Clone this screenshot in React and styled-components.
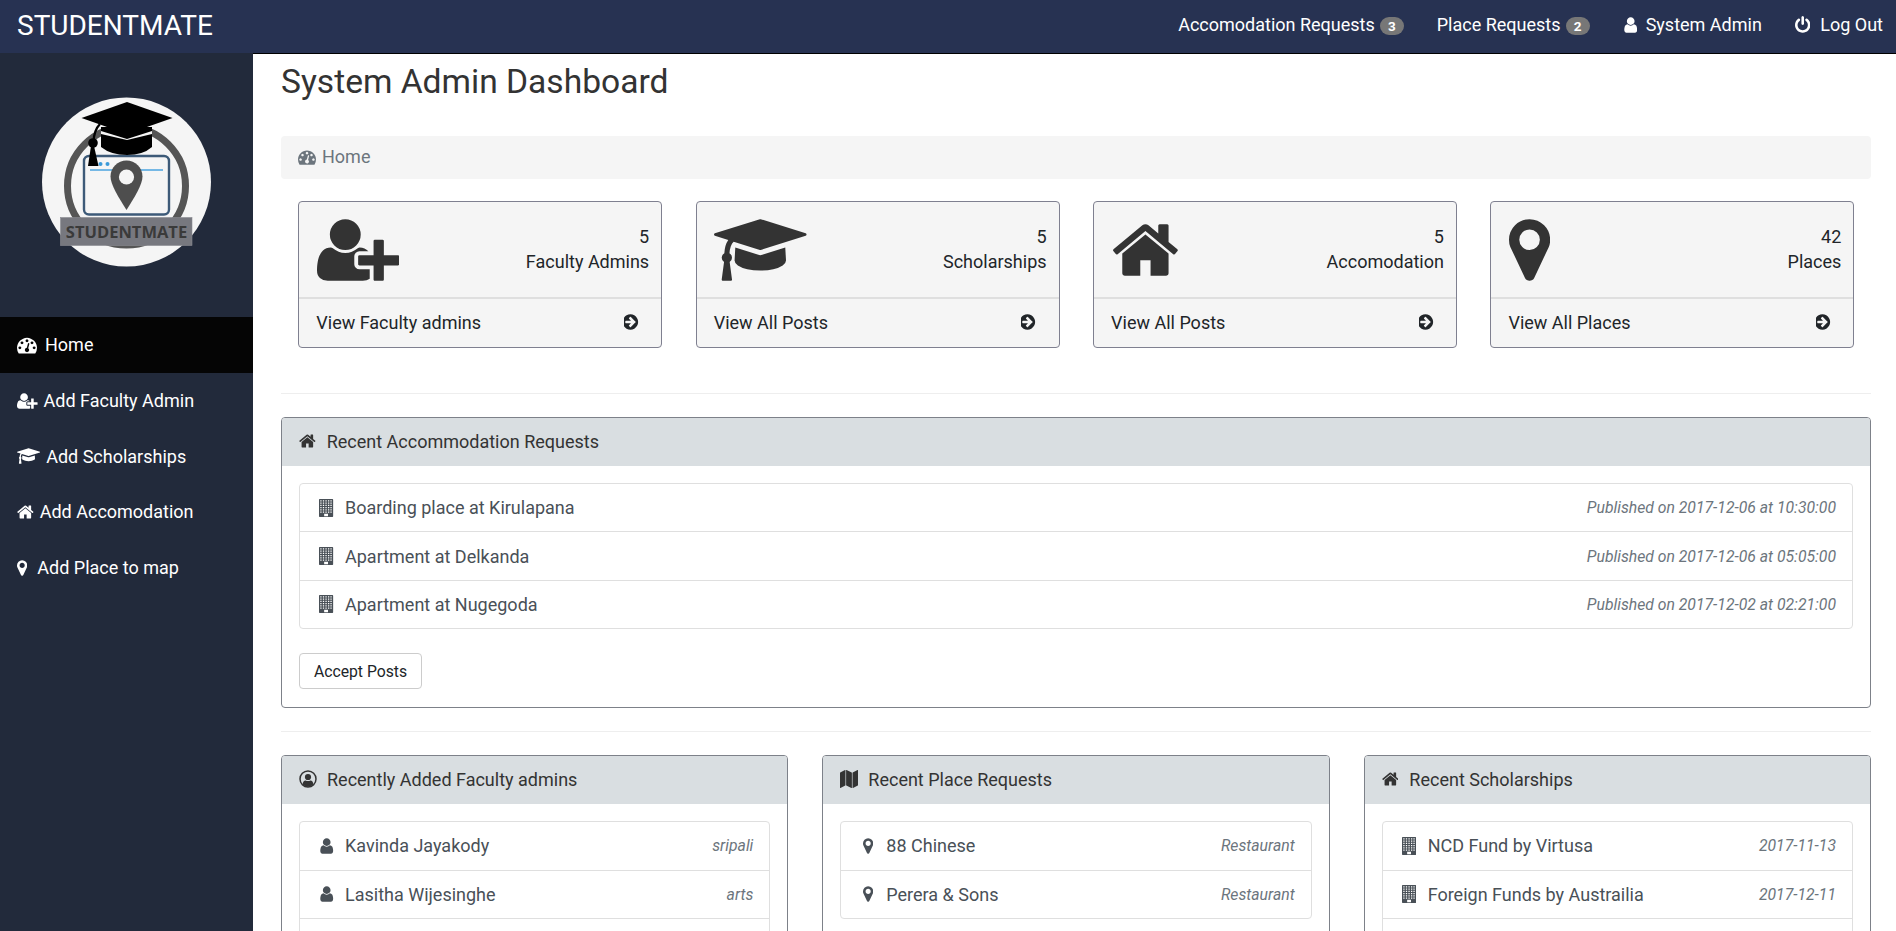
import React from "react"
import styled, { createGlobalStyle } from "styled-components"

const GlobalStyle = createGlobalStyle`
    html, body {
        margin: 0;
        height: 100%;
        overflow: hidden;
        background: #fff;
        font-family: Roboto, "Liberation Sans", sans-serif;
    }
    * {
        box-sizing: border-box;
    }
`

const buildingWindows = () => {
    let d = "M192 0h1280q64 0 64 64v1664q0 64-64 64h-1280q-64 0-64-64v-1664q0-64 64-64z"
    const cols = [320, 576, 832, 1088, 1344 - 16]
    const rows = [128, 352, 576, 800, 1024, 1248]
    rows.forEach(y => {
        cols.forEach(x => {
            d += `M${x - 64} ${y}h128v128h-128z`
        })
    })
    return d + "M640 1472h384v256h-384z"
}

const ICONS = {
    dashboard: { box: "0 0 1792 1792", d: "M384 1152q0-53-37.5-90.5t-90.5-37.5-90.5 37.5-37.5 90.5 37.5 90.5 90.5 37.5 90.5-37.5 37.5-90.5zm192-448q0-53-37.5-90.5t-90.5-37.5-90.5 37.5-37.5 90.5 37.5 90.5 90.5 37.5 90.5-37.5 37.5-90.5zm428 481l101-382q6-26-7.5-48.5t-38.5-29.5-48 6.5-30 39.5l-101 382q-60 5-107 43.5t-63 98.5q-20 77 20 146t117 89 146-20 89-117q16-60-6-117t-72-91zm660-33q0-53-37.5-90.5t-90.5-37.5-90.5 37.5-37.5 90.5 37.5 90.5 90.5 37.5 90.5-37.5 37.5-90.5zm-640-640q0-53-37.5-90.5t-90.5-37.5-90.5 37.5-37.5 90.5 37.5 90.5 90.5 37.5 90.5-37.5 37.5-90.5zm448 192q0-53-37.5-90.5t-90.5-37.5-90.5 37.5-37.5 90.5 37.5 90.5 90.5 37.5 90.5-37.5 37.5-90.5zm320 448q0 261-141 483-19 29-54 29h-1402q-35 0-54-29-141-221-141-483 0-182 71-348t191-286 286-191 348-71 348 71 286 191 191 286 71 348z" },
    userPlus: { box: "0 0 2048 1792", d: "M704 896q-159 0-271.5-112.5t-112.5-271.5 112.5-271.5 271.5-112.5 271.5 112.5 112.5 271.5-112.5 271.5-271.5 112.5zm960 128h352q13 0 22.5 9.5t9.5 22.5v192q0 13-9.5 22.5t-22.5 9.5h-352v352q0 13-9.5 22.5t-22.5 9.5h-192q-13 0-22.5-9.5t-9.5-22.5v-352h-352q-13 0-22.5-9.5t-9.5-22.5v-192q0-13 9.5-22.5t22.5-9.5h352v-352q0-13 9.5-22.5t22.5-9.5h192q13 0 22.5 9.5t9.5 22.5v352zm-736 224q0 52 38 90t90 38h256v238q-68 50-171 50h-874q-121 0-194-69t-73-190q0-53 3.5-103.5t14-109 26.5-108.5 43-97.5 62-81 85.5-53.5 111.5-20q19 0 39 17 79 61 154.5 91.5t164.5 30.5 164.5-30.5 154.5-91.5q20-17 39-17 132 0 217 96h-223q-52 0-90 38t-38 90v192z" },
    cap: { box: "0 0 2304 1792", d: "M1774 836l18 316q4 69-82 128t-235 93.5-323 34.5-323-34.5-235-93.5-82-128l18-316 574 181q22 7 48 7t48-7zm530-324q0 23-22 31l-1120 352q-4 1-10 1t-10-1l-652-206q-43 34-71 111.5t-34 178.5q63 36 63 109 0 69-58 107l58 433q2 14-8 25-9 11-24 11h-192q-15 0-24-11-10-11-8-25l58-433q-58-38-58-107 0-73 65-111 11-207 98-330l-333-104q-22-8-22-31t22-31l1120-352q4-1 10-1t10 1l1120 352q22 8 22 31z" },
    home: { box: "64 0 1664 1792", d: "M1472 992v480q0 26-19 45t-45 19h-384v-384h-256v384h-384q-26 0-45-19t-19-45v-480q0-1 .5-3t.5-3l575-474 575 474q1 2 1 6zm223-69l-62 74q-8 9-21 11h-3q-13 0-21-7l-692-577-692 577q-12 8-24 7-13-2-21-11l-62-74q-8-10-7-23.5t11-21.5l719-599q32-26 76-26t76 26l244 204v-195q0-14 9-23t23-9h192q14 0 23 9t9 23v408l219 182q10 8 11 21.5t-7 23.5z" },
    marker: { box: "384 0 1024 1792", d: "M1152 640q0-106-75-181t-181-75-181 75-75 181 75 181 181 75 181-75 75-181zm256 0q0 109-33 179l-364 774q-16 33-47.5 52t-67.5 19-67.5-19-46.5-52l-365-774q-33-70-33-179 0-212 150-362t362-150 362 150 150 362z" },
    user: { box: "128 0 1408 1792", d: "M1536 1399q0 109-62.5 187t-150.5 78h-854q-88 0-150.5-78t-62.5-187q0-85 8.5-160.5t31.5-152 58.5-131 94-89 134.5-34.5q131 128 313 128t313-128q76 0 134.5 34.5t94 89 58.5 131 31.5 152 8.5 160.5zm-256-887q0 159-112.5 271.5t-271.5 112.5-271.5-112.5-112.5-271.5 112.5-271.5 271.5-112.5 271.5 112.5 112.5 271.5z" },
    power: { box: "128 0 1536 1792", d: "M1664 896q0 156-61 298t-164 245-245 164-298 61-298-61-245-164-164-245-61-298q0-182 80.5-343t226.5-270q43-32 95.5-25t83.5 50q32 42 24.5 94.5t-49.5 84.5q-98 74-151.5 181t-53.5 228q0 104 40.5 198.5t109.5 163.5 163.5 109.5 198.5 40.5 198.5-40.5 163.5-109.5 109.5-163.5 40.5-198.5q0-121-53.5-228t-151.5-181q-42-32-49.5-84.5t24.5-94.5q31-43 84-50t95 25q146 109 226.5 270t80.5 343zm-640-768v640q0 52-38 90t-90 38-90-38-38-90v-640q0-52 38-90t90-38 90 38 38 90z" },
    arrow: { box: "128 0 1536 1792", d: "M1285 896q0-27-18-45l-91-91-362-362q-18-18-45-18t-45 18l-91 91q-18 18-18 45t18 45l189 189h-502q-26 0-45 19t-19 45v128q0 26 19 45t45 19h502l-189 189q-19 19-19 45t19 45l91 91q18 18 45 18t45-18l362-362 91-91q18-18 18-45zm251 0q0 209-103 385.5t-279.5 279.5-385.5 103-385.5-103-279.5-279.5-103-385.5 103-385.5 279.5-279.5 385.5-103 385.5 103 279.5 279.5 103 385.5z" },
    map: { box: "0 0 1792 1792", d: "M512 0q13 0 22.5 9.5t9.5 22.5v1472q0 20-17 28l-480 256q-7 4-15 4-13 0-22.5-9.5t-9.5-22.5v-1472q0-20 17-28l480-256q7-4 15-4zm1248 0q13 0 22.5 9.5t9.5 22.5v1472q0 20-17 28l-480 256q-7 4-15 4-13 0-22.5-9.5t-9.5-22.5v-1472q0-20 17-28l480-256q7-4 15-4zm-1120 0q8 0 14 3l512 256q18 10 18 29v1472q0 13-9.5 22.5t-22.5 9.5q-8 0-14-3l-512-256q-18-10-18-29v-1472q0-13 9.5-22.5t22.5-9.5z" },
    building: { box: "128 0 1408 1792", d: buildingWindows() },
}

const Glyph = ({ name, size }) => {
    const icon = ICONS[name]
    const [, , w, h] = icon.box.split(" ").map(Number)
    return (
        <svg width={(size * w) / h} height={size} viewBox={icon.box} fill="currentColor" fillRule="evenodd">
            <path d={icon.d} />
        </svg>
    )
}

const UserCircle = () => (
    <svg width="18" height="18" viewBox="0 0 18 18" fill="currentColor">
        <circle cx="9" cy="9" r="8" fill="none" stroke="currentColor" strokeWidth="1.5" />
        <circle cx="9" cy="7" r="3.1" />
        <path d="M3.6 14.4q.4-3.6 3-3.9 2.4 1.2 4.8 0 2.6.3 3 3.9-2.4 2.4-5.4 2.4t-5.4-2.4z" />
    </svg>
)

const Logo = () => (
    <svg width="170" height="170" viewBox="42 97 170 170">
        <circle cx="126.5" cy="182" r="84.5" fill="#f5f5f5" />
        <circle cx="126.5" cy="186" r="59" fill="none" stroke="#555" strokeWidth="7" />
        <rect x="84" y="156" width="85" height="58.5" rx="5" fill="#f5f5f5" stroke="#3d5a78" strokeWidth="2.4" />
        <path d="M90 170H163" stroke="#4aa3df" strokeWidth="1.4" />
        <circle cx="100.5" cy="164" r="2" fill="#3a9ad9" />
        <circle cx="107.5" cy="164" r="2" fill="#3a9ad9" />
        <path d="M126.5 160.5c-8.8 0-16 7-16 16 0 8 8 21 16 33.5 8-12.5 16-25.5 16-33.5 0-9-7.2-16-16-16z" fill="#4e4e4e" />
        <circle cx="126.5" cy="177" r="7.6" fill="#f5f5f5" />
        <path d="M101 127v20q10 8 26 8t25-8v-20z" fill="#000" />
        <path d="M101 131l26 8 25-8v3l-25 6-26-6z" fill="#f5f5f5" />
        <path d="M127 102l45.5 16-45.5 16-45.5-16z" fill="#000" />
        <path d="M100 124q-6 6-6.500 18" stroke="#000" strokeWidth="2.4" fill="none" />
        <circle cx="93" cy="143" r="4.800" fill="#000" />
        <path d="M91 146h3l4.500 20h-10.500z" fill="#000" />
        <rect x="60.500" y="217.500" width="131.500" height="28" fill="#77787f" stroke="#8a8a92" strokeWidth=".6" />
        <LogoLabel x="126.500" y="238" textAnchor="middle">STUDENTMATE</LogoLabel>
    </svg>
)

const LogoLabel = styled.text`
    font-family: "Open Sans", sans-serif;
    font-weight: 700;
    font-size: 16.5px;
    fill: #3a3a3a;
`

const Page = styled.div`
    height: 100vh;
    overflow: hidden;
    display: flex;
    flex-direction: column;
`

const Navbar = styled.nav`
    flex: 0 0 53px;
    background: #273252;
    display: flex;
    align-items: center;
    justify-content: space-between;
    padding: 0 13px 2px 17px;
    color: #fff;
`

const Brand = styled.div`
    font-size: 28px;
`

const NavLinks = styled.div`
    display: flex;
    align-items: center;
    gap: 33px;
    padding-bottom: 2px;
`

const NavLink = styled.div`
    display: flex;
    align-items: center;
    gap: ${props => props.$gap || 5}px;
    font-size: 18px;
`

const Badge = styled.span`
    display: inline-block;
    min-width: 24px;
    height: 18px;
    line-height: 18px;
    margin-top: 3px;
    border-radius: 9px;
    background: #777;
    font-size: 13.5px;
    font-weight: 700;
    text-align: center;
`

const Layout = styled.div`
    flex: 1;
    min-height: 0;
    display: flex;
`

const Sidebar = styled.aside`
    flex: 0 0 253px;
    background: #222a3b;
    color: #fff;
`

const LogoWrap = styled.div`
    padding: 44px 0 50px 42px;
    line-height: 0;
`

const SideItem = styled.div`
    height: 55.7px;
    display: flex;
    align-items: center;
    gap: ${props => props.$gap}px;
    padding-left: 17px;
    font-size: 18px;
    background: ${props => (props.$active ? "#050505" : "transparent")};
`

const Main = styled.main`
    flex: 1;
    min-width: 0;
    border-top: 1px solid #000;
    padding: 0 25px 0 28px;
`

const Title = styled.h1`
    margin: 6px 0 32px;
    font-size: 33.6px;
    line-height: 44px;
    font-weight: 400;
    color: #333;
`

const Breadcrumb = styled.div`
    height: 43px;
    display: flex;
    align-items: center;
    gap: 6px;
    padding: 0 17px 2px;
    margin-bottom: 22px;
    border-radius: 4px;
    background: #f5f5f5;
    color: #6c757d;
    font-size: 18px;
`

const StatRow = styled.div`
    display: grid;
    grid-template-columns: repeat(4, 1fr);
    gap: 33.5px;
    padding: 0 16.7px 0 17.3px;
`

const StatCard = styled.div`
    height: 147px;
    display: flex;
    flex-direction: column;
    background: #f5f5f5;
    border: 1px solid #7f8090;
    border-radius: 4px;
    color: #333;
`

const StatBody = styled.div`
    flex: 0 0 95px;
    display: flex;
    justify-content: space-between;
    padding: 12px 12px 0 17.5px;
    line-height: 0;
`

const StatText = styled.div`
    padding-top: 10px;
    text-align: right;
    font-size: 18px;
    line-height: 25px;
    color: #212529;
`

const StatFooter = styled.div`
    flex: 1;
    display: flex;
    align-items: center;
    justify-content: space-between;
    padding: 0 22px 2px 17px;
    border-top: 2px solid #dfdfdf;
    font-size: 18px;
    color: #212529;
`

const Divider = styled.hr`
    margin: ${props => props.$top}px 0 23px;
    height: 1px;
    border: 0;
    background: #eee;
`

const Panel = styled.section`
    border: 1px solid #7d8189;
    border-radius: 4px;
    overflow: hidden;
`

const PanelHeader = styled.header`
    height: 47.5px;
    display: flex;
    align-items: center;
    gap: ${props => props.$gap || 10}px;
    padding: 0 17px 1.5px;
    background: #d9dee1;
    color: #333;
    font-size: 18px;
`

const PanelBody = styled.div`
    padding: 17.5px 17px 18px;
`

const List = styled.div`
    border: 1px solid #dfdfdf;
    border-radius: 4px;
`

const Row = styled.div`
    height: 47.4px;
    display: flex;
    align-items: center;
    padding: 0 16px 0 18px;
    color: #495057;
    font-size: 18px;
    & + & {
        box-sizing: content-box;
        border-top: 1px solid #dfdfdf;
    }
`

const RowIcon = styled.span`
    flex: 0 0 17px;
    display: flex;
    justify-content: center;
    margin-right: 10px;
`

const RowLabel = styled.span`
    flex: 1;
    min-height: 1em;
`

const RowMeta = styled.em`
    color: #6c757d;
    font-size: 15.75px;
`

const Button = styled.button`
    display: block;
    margin-top: 24px;
    width: 123px;
    height: 36px;
    padding: 0;
    background: #fff;
    border: 1px solid #ccc;
    border-radius: 4px;
    color: #212529;
    font-family: inherit;
    font-size: 15.75px;
`

const PanelRow = styled.div`
    display: grid;
    grid-template-columns: repeat(3, 1fr);
    gap: 34px;
    align-items: start;
`

const SIDE_ITEMS = [
    { icon: "dashboard", size: 20, gap: 8, label: "Home", active: true },
    { icon: "userPlus", size: 18, gap: 6, label: "Add Faculty Admin" },
    { icon: "cap", size: 18, gap: 6, label: "Add Scholarships" },
    { icon: "home", size: 18, gap: 6, label: "Add Accomodation" },
    { icon: "marker", size: 18, gap: 10, label: "Add Place to map" },
]

const STATS = [
    { icon: "userPlus", count: 5, label: "Faculty Admins", link: "View Faculty admins" },
    { icon: "cap", count: 5, label: "Scholarships", link: "View All Posts" },
    { icon: "home", count: 5, label: "Accomodation", link: "View All Posts" },
    { icon: "marker", count: 42, label: "Places", link: "View All Places" },
]

const REQUESTS = [
    { label: "Boarding place at Kirulapana", meta: "Published on 2017-12-06 at 10:30:00" },
    { label: "Apartment at Delkanda", meta: "Published on 2017-12-06 at 05:05:00" },
    { label: "Apartment at Nugegoda", meta: "Published on 2017-12-02 at 02:21:00" },
]

const FACULTY = [
    { label: "Kavinda Jayakody", meta: "sripali" },
    { label: "Lasitha Wijesinghe", meta: "arts" },
    { label: "\u00a0", meta: "" },
]

const PLACES = [
    { label: "88 Chinese", meta: "Restaurant" },
    { label: "Perera & Sons", meta: "Restaurant" },
]

const SCHOLARSHIPS = [
    { label: "NCD Fund by Virtusa", meta: "2017-11-13" },
    { label: "Foreign Funds by Austrailia", meta: "2017-12-11" },
    { label: "\u00a0", meta: "" },
]

const renderRows = (rows, icon) => (
    <List>
        {rows.map((row, index) => (
            <Row key={index}>
                <RowIcon>{row.meta ? <Glyph name={icon} size={18} /> : null}</RowIcon>
                <RowLabel>{row.label}</RowLabel>
                <RowMeta>{row.meta}</RowMeta>
            </Row>
        ))}
    </List>
)

export default function App() {
    return (
        <Page>
            <GlobalStyle />
            <Navbar>
                <Brand>STUDENTMATE</Brand>
                <NavLinks>
                    <NavLink>Accomodation Requests <Badge>3</Badge></NavLink>
                    <NavLink>Place Requests <Badge>2</Badge></NavLink>
                    <NavLink $gap={9}><Glyph name="user" size={18} /> System Admin</NavLink>
                    <NavLink $gap={10}><Glyph name="power" size={18} /> Log Out</NavLink>
                </NavLinks>
            </Navbar>
            <Layout>
                <Sidebar>
                    <LogoWrap><Logo /></LogoWrap>
                    {SIDE_ITEMS.map(item => (
                        <SideItem key={item.label} $gap={item.gap} $active={item.active}>
                            <Glyph name={item.icon} size={item.size} />
                            {item.label}
                        </SideItem>
                    ))}
                </Sidebar>
                <Main>
                    <Title>System Admin Dashboard</Title>
                    <Breadcrumb><Glyph name="dashboard" size={18} /> Home</Breadcrumb>
                    <StatRow>
                        {STATS.map(stat => (
                            <StatCard key={stat.label}>
                                <StatBody>
                                    <Glyph name={stat.icon} size={72} />
                                    <StatText>{stat.count}<br />{stat.label}</StatText>
                                </StatBody>
                                <StatFooter>
                                    {stat.link}
                                    <Glyph name="arrow" size={18} />
                                </StatFooter>
                            </StatCard>
                        ))}
                    </StatRow>
                    <Divider $top={45} />
                    <Panel>
                        <PanelHeader $gap={11}><Glyph name="home" size={18} /> Recent Accommodation Requests</PanelHeader>
                        <PanelBody>
                            {renderRows(REQUESTS, "building")}
                            <Button>Accept Posts</Button>
                        </PanelBody>
                    </Panel>
                    <Divider $top={23} />
                    <PanelRow>
                        <Panel>
                            <PanelHeader><UserCircle /> Recently Added Faculty admins</PanelHeader>
                            <PanelBody>{renderRows(FACULTY, "user")}</PanelBody>
                        </Panel>
                        <Panel>
                            <PanelHeader><Glyph name="map" size={18} /> Recent Place Requests</PanelHeader>
                            <PanelBody>{renderRows(PLACES, "marker")}</PanelBody>
                        </Panel>
                        <Panel>
                            <PanelHeader $gap={11}><Glyph name="home" size={18} /> Recent Scholarships</PanelHeader>
                            <PanelBody>{renderRows(SCHOLARSHIPS, "building")}</PanelBody>
                        </Panel>
                    </PanelRow>
                </Main>
            </Layout>
        </Page>
    )
}
